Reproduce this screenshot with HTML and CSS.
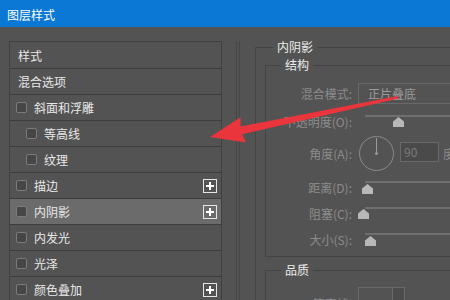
FILE: index.html
```html
<!DOCTYPE html>
<html lang="zh-CN">
<head>
    <meta charset="UTF-8">
    <title>图层样式</title>
    <link rel="stylesheet" href="styles.css">
</head>
<body>
    <div class="titlebar">图层样式</div>
    <div class="dialog">
        <ul class="style-list">
            <li class="item plain">样式</li>
            <li class="item plain">混合选项</li>
            <li class="item"><span class="check"></span>斜面和浮雕</li>
            <li class="item sub"><span class="check"></span>等高线</li>
            <li class="item sub"><span class="check"></span>纹理</li>
            <li class="item"><span class="check"></span>描边<span class="add"></span></li>
            <li class="item active"><span class="check"></span>内阴影<span class="add"></span></li>
            <li class="item"><span class="check"></span>内发光</li>
            <li class="item"><span class="check"></span>光泽</li>
            <li class="item"><span class="check"></span>颜色叠加<span class="add"></span></li>
        </ul>
        <div class="divider"></div>
        <fieldset class="group outer">
            <legend>内阴影</legend>
            <fieldset class="group inner structure">
                <legend>结构</legend>
                <div class="row blend">
                    <label>混合模式:</label>
                    <div class="select">正片叠底</div>
                </div>
                <div class="row slider-row">
                    <label>不透明度(O):</label>
                    <div class="slider"><span class="thumb" style="left: 35px"></span></div>
                </div>
                <div class="row angle-row">
                    <label>角度(A):</label>
                    <div class="dial"><span class="needle"></span><span class="hub"></span></div>
                    <div class="num">90</div>
                    <span class="unit">度</span>
                </div>
                <div class="row slider-row">
                    <label>距离(D):</label>
                    <div class="slider low"><span class="thumb" style="left: 4px"></span></div>
                </div>
                <div class="row slider-row">
                    <label>阻塞(C):</label>
                    <div class="slider"><span class="thumb" style="left: 0px"></span></div>
                </div>
                <div class="row slider-row">
                    <label>大小(S):</label>
                    <div class="slider low"><span class="thumb" style="left: 7px"></span></div>
                </div>
            </fieldset>
            <fieldset class="group inner quality">
                <legend>品质</legend>
                <div class="row">
                    <label>等高线:</label>
                    <div class="contour"><span></span></div>
                </div>
            </fieldset>
        </fieldset>
    </div>

    <svg class="arrow" width="450" height="300" viewBox="0 0 450 300">
        <polygon points="210,137 240.6,117.2 240.5,126.4 397.8,96 398.2,98.4 242.1,134.2 246,142.6" fill="#e9353b"/>
    </svg>
</body>
</html>
```

FILE: styles.css
```css
body {
    margin: 0;
    width: 450px;
    height: 300px;
    overflow: hidden;
    position: relative;
    background-color: #535353;
    font-family: "Noto Sans CJK SC", "Noto Sans", sans-serif;
    font-size: 12px;
    color: #e8e8e8;
}

.titlebar {
    height: 25px;
    padding: 2px 0 0 7px;
    line-height: 25px;
    background-color: #0a78d4;
    color: #ffffff;
}

.dialog {
    display: flex;
    align-items: flex-start;
}

/* left list of effects */
.style-list {
    list-style: none;
    margin: 14px 0 0 9px;
    padding: 1px 0 0 0;
    width: 213px;
    flex-shrink: 0;
    border: 1px solid #404040;
    box-sizing: border-box;
}

.item {
    display: flex;
    align-items: center;
    height: 26px;
    padding-left: 6px;
    border-bottom: 1px solid #3d3d3d;
    box-sizing: border-box;
    line-height: 14px;
}

.item.plain {
    padding-left: 8px;
}

.item.sub {
    padding-left: 16px;
}

.item.active {
    background-color: #6b6b6b;
}

.check {
    width: 9px;
    height: 9px;
    border: 1px solid #7b7b7b;
    border-radius: 2px;
    background-color: #464646;
    margin-right: 7px;
    flex-shrink: 0;
}

.add {
    position: relative;
    width: 12px;
    height: 12px;
    margin-left: auto;
    margin-right: 4px;
    border: 1px solid #e6e6e6;
}

.add::before,
.add::after {
    content: "";
    position: absolute;
    background-color: #ffffff;
}

.add::before {
    left: 2px;
    top: 5px;
    width: 8px;
    height: 2px;
}

.add::after {
    left: 5px;
    top: 2px;
    width: 2px;
    height: 8px;
}

.divider {
    width: 2px;
    height: 280px;
    margin: 14px 0 0 14px;
    border-left: 1px solid #464646;
    border-right: 1px solid #464646;
    flex-shrink: 0;
}

/* option groups */
.group {
    margin: 0;
    border: 1px solid #444444;
    min-inline-size: 0;
}

.group legend {
    padding: 0 4px;
    line-height: 14px;
    color: #ececec;
}

.outer {
    flex-shrink: 0;
    width: 300px;
    margin: 13px 0 0 15px;
    padding: 4px 0 0 9px;
}

.outer > legend {
    margin-left: 8px;
}

.inner {
    width: 280px;
    padding: 0;
}

.inner > legend {
    margin-left: 15px;
}

.structure {
    padding: 11px 0 7px 0;
}

.quality {
    margin-top: 6px;
    padding-top: 10px;
}

.row {
    display: flex;
    align-items: center;
    height: 20px;
    margin-top: 6px;
}

.row label {
    width: 86px;
    margin-right: 6px;
    text-align: right;
    color: #8c8c8c;
    flex-shrink: 0;
}

.row.blend {
    height: 21px;
    margin-top: 0;
}

.select {
    width: 120px;
    height: 19px;
    padding-left: 9px;
    line-height: 19px;
    border: 1px solid #686868;
    color: #9c9c9c;
}

.slider-row:nth-child(3) {
    margin-top: 7px;
}

.slider {
    position: relative;
    width: 120px;
    height: 20px;
}

.slider::before {
    content: "";
    position: absolute;
    left: 7px;
    right: 0;
    top: 4px;
    height: 2px;
    background-color: #6f6f6f;
}

.thumb {
    position: absolute;
    top: 6px;
    width: 11px;
    height: 10px;
    background-color: #b8b8b8;
    clip-path: polygon(50% 0, 100% 45%, 100% 100%, 0 100%, 0 45%);
}

.slider.low .thumb {
    top: 7px;
}

.angle-row {
    height: 35px;
    margin-top: 5px;
}

.dial {
    position: relative;
    width: 33px;
    height: 33px;
    margin-left: 1px;
    border: 1px solid #8a8a8a;
    border-radius: 50%;
    flex-shrink: 0;
}

.needle {
    position: absolute;
    left: 16px;
    top: 1px;
    width: 1px;
    height: 16px;
    background-color: #9a9a9a;
}

.hub {
    position: absolute;
    left: 15px;
    top: 15px;
    width: 3px;
    height: 3px;
    border-radius: 50%;
    background-color: #9a9a9a;
}

.num {
    width: 34px;
    height: 18px;
    margin: -3px 0 0 6px;
    padding-left: 3px;
    line-height: 18px;
    border: 1px solid #696969;
    background-color: #4a4a4a;
    color: #7b7b7b;
}

.unit {
    margin-left: 4px;
    color: #8c8c8c;
}

.quality .row {
    margin-top: 0;
    height: 24px;
    align-items: flex-start;
}

.quality label {
    padding-top: 8px;
}

.contour {
    width: 47px;
    height: 24px;
    border: 1px solid #696969;
    box-sizing: border-box;
    display: flex;
    justify-content: flex-end;
}

.contour span {
    width: 11px;
    border-left: 1px solid #696969;
    background-color: #4c4c4c;
}

.arrow {
    position: absolute;
    left: 0;
    top: 0;
    pointer-events: none;
}
```
